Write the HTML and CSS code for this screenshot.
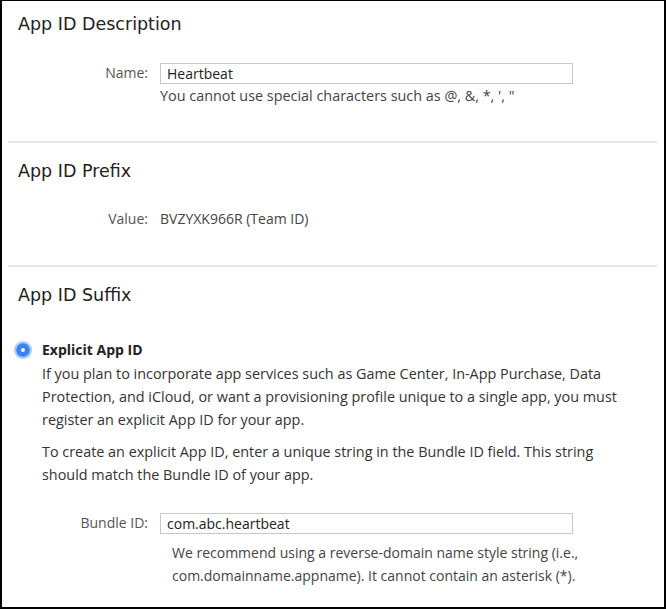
FILE: index.html
```html
<!DOCTYPE html>
<html>
<head>
<meta charset="utf-8">
<link rel="stylesheet" href="styles.css">
</head>
<body>
<div class="frame">
  <section class="section section-desc">
    <h2 class="heading heading-first">App ID Description</h2>
    <div class="field">
      <label class="label">Name:</label>
      <div class="control">
        <div class="input">Heartbeat</div>
        <div class="hint">You cannot use special characters such as @, &amp;, *, ', "</div>
      </div>
    </div>
  </section>
  <hr class="sep">
  <section class="section section-prefix">
    <h2 class="heading">App ID Prefix</h2>
    <div class="field field-value">
      <span class="label">Value:</span>
      <span class="value">BVZYXK966R (Team ID)</span>
    </div>
  </section>
  <hr class="sep">
  <section class="section">
    <h2 class="heading">App ID Suffix</h2>
    <div class="option">
      <span class="radio"><span class="radio-dot"></span></span>
      <div class="option-body">
        <div class="option-title">Explicit App ID</div>
        <p class="para">If you plan to incorporate app services such as Game Center, In-App Purchase, Data<br>Protection, and iCloud, or want a provisioning profile unique to a single app, you must<br>register an explicit App ID for your app.</p>
        <p class="para">To create an explicit App ID, enter a unique string in the Bundle ID field. This string<br>should match the Bundle ID of your app.</p>
      </div>
    </div>
    <div class="field field-bundle">
      <label class="label">Bundle ID:</label>
      <div class="control">
        <div class="input">com.abc.heartbeat</div>
        <div class="hint hint-indent">We recommend using a reverse-domain name style string (i.e.,<br>com.domainname.appname). It cannot contain an asterisk (*).</div>
      </div>
    </div>
  </section>
</div>
</body>
</html>
```
FILE: styles.css
```css
html, body {
  margin: 0;
  padding: 0;
  background: #fff;
}
body {
  font-family: "Open Sans", "Liberation Sans", sans-serif;
  color: #333;
}
.frame {
  box-sizing: border-box;
  width: 666px;
  height: 609px;
  border-top: 1px solid #000;
  border-left: 2px solid #000;
  border-right: 2px solid #000;
  border-bottom: 2px solid #000;
  overflow: hidden;
}
.section {
  padding: 0 0 0 16px;
}
.section-desc {
  height: 140px;
}
.section-prefix {
  height: 122px;
}
.heading {
  margin: 0;
  padding-top: 17px;
  font-family: "DejaVu Sans", sans-serif;
  font-weight: normal;
  font-size: 17.5px;
  line-height: 22px;
  color: #222;
}
.heading-first {
  padding-top: 12px;
}
.sep {
  margin: 0 7px 0 6px;
  border: 0;
  border-top: 2px solid #e6e6e6;
  height: 0;
}
.field {
  display: flex;
  align-items: flex-start;
  margin-top: 28px;
}
.label {
  width: 130px;
  text-align: right;
  font-size: 14px;
  line-height: 20px;
  color: #555;
  flex: none;
}
.control {
  margin-left: 12px;
  width: 413px;
  flex: none;
}
.input {
  box-sizing: border-box;
  height: 21px;
  border: 1px solid #c8c8c8;
  padding: 0 6px;
  font-size: 14px;
  line-height: 19px;
  color: #222;
}
.hint {
  font-size: 14.4px;
  line-height: 23px;
  color: #444;
  white-space: nowrap;
}
.field-value {
  margin-top: 27px;
  align-items: baseline;
}
.value {
  margin-left: 12px;
  font-size: 14px;
  color: #444;
}
.option {
  display: flex;
  margin-top: 32px;
}
.radio {
  flex: none;
  width: 14px;
  height: 14px;
  margin-left: -2px;
  margin-top: 5px;
  border-radius: 50%;
  background: radial-gradient(circle, #2f7cf0 0, #3b86f2 60%, #8ab8f7 100%);
  box-shadow: 0 0 0 2px #a9cdf9;
  display: flex;
  align-items: center;
  justify-content: center;
}
.radio-dot {
  width: 4px;
  height: 4px;
  border-radius: 50%;
  background: #fff;
}
.option-body {
  margin-left: 12px;
}
.option-title {
  font-weight: bold;
  font-size: 14px;
  line-height: 24px;
  color: #222;
}
.para {
  margin: 0 0 9px;
  font-size: 14.4px;
  line-height: 23px;
  color: #333;
  white-space: nowrap;
}
.field-bundle {
  margin-top: 18px;
}
.hint-indent {
  font-size: 14px;
  padding-left: 12px;
  padding-top: 7px;
}
```
